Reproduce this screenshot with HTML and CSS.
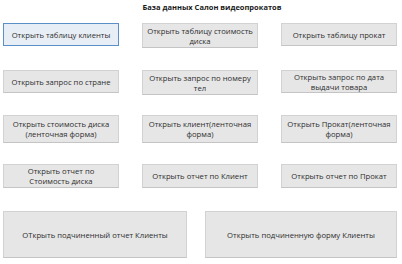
FILE: index.html
```html
<!DOCTYPE html>
<html lang="ru">
<head>
    <meta charset="UTF-8">
    <title>База данных Салон видеопрокатов</title>
    <link rel="stylesheet" href="styles.css">
</head>
<body>
    <div class="form">
        <h2 class="form-title">База данных Салон видеопрокатов</h2>

        <div class="btn-row row-1">
            <button class="form-btn active">Открыть таблицу клиенты</button>
            <button class="form-btn tall">Открыть таблицу стоимость диска</button>
            <button class="form-btn">Открыть таблицу прокат</button>
        </div>

        <div class="btn-row row-2">
            <button class="form-btn">Открыть запрос по стране</button>
            <button class="form-btn tall">Открыть запрос по номеру тел</button>
            <button class="form-btn">Открыть запрос по дата выдачи товара</button>
        </div>

        <div class="btn-row row-3">
            <button class="form-btn">Открыть стоимость диска (ленточная форма)</button>
            <button class="form-btn">Открыть клиент(ленточная форма)</button>
            <button class="form-btn">Открыть Прокат(ленточная форма)</button>
        </div>

        <div class="btn-row row-4">
            <button class="form-btn narrow">Открыть отчет по Стоимость диска</button>
            <button class="form-btn">Открыть отчет по Клиент</button>
            <button class="form-btn">Открыть отчет по Прокат</button>
        </div>

        <div class="wide-row">
            <button class="form-btn big">ОТкрыть подчиненный отчет Клиенты</button>
            <button class="form-btn big">Открыть подчиненную форму Клиенты</button>
        </div>
    </div>
</body>
</html>
```

FILE: styles.css
```css
/* Главная кнопочная форма */
body {
    margin: 0;
    background: #ffffff;
    font-family: "Open Sans", "Noto Sans", sans-serif;
}

.form {
    padding: 2px 5px 0 3px;
}

.form-title {
    margin: 0;
    padding-left: 24px;
    font-size: 7.5px;
    line-height: 10px;
    font-weight: bold;
    color: #1a1a1a;
    text-align: center;
}

.btn-row {
    display: grid;
    grid-template-columns: 116px 116px 116px;
    column-gap: 23px;
    align-items: start;
    height: 23px;
}

.row-1 {
    margin-top: 11px;
    margin-bottom: 24px;
}

.row-2 {
    margin-bottom: 22px;
}

.row-3 {
    height: 28px;
    margin-bottom: 21px;
}

.row-4 {
    height: 24px;
}

.form-btn {
    height: 23px;
    margin: 0;
    padding: 0;
    border: 1px solid #d2d2d2;
    border-bottom-color: #c4c4c4;
    background-color: #e6e6e6;
    color: #2e2e2e;
    font-family: inherit;
    font-size: 7.7px;
    line-height: 10px;
    text-align: center;
}

.form-btn.active {
    border-color: #5b8fc7;
    background-color: #e8eef6;
}

.form-btn.tall {
    height: 25px;
}

.form-btn.narrow {
    padding: 0 18px;
}

.row-3 .form-btn {
    height: 28px;
}

.row-4 .form-btn {
    height: 24px;
}

.wide-row {
    display: grid;
    grid-template-columns: 184px 192px;
    column-gap: 18px;
    margin-top: 23px;
}

.form-btn.big {
    height: 47px;
}
```
